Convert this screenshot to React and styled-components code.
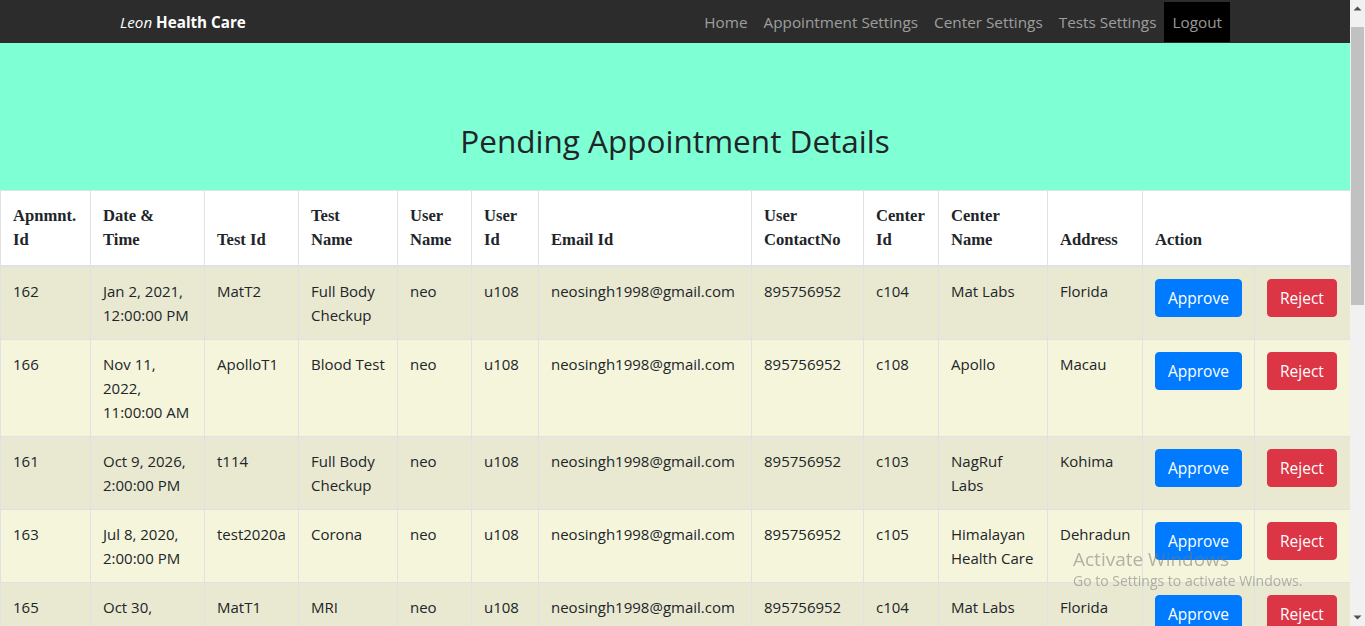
import React from "react";
import styled, { createGlobalStyle } from "styled-components";

const Global = createGlobalStyle`
  html, body { margin: 0; height: 100%; overflow: hidden; }
  body {
    font-family: "Open Sans", "Noto Sans", sans-serif;
    font-size: 15px;
    line-height: 24px;
    color: #212529;
    background: #fff;
  }
  * { box-sizing: border-box; }
`;

const Screen = styled.div`
  display: flex;
  height: 100vh;
`;

const Page = styled.main`
  flex: 1;
  min-width: 0;
  overflow: hidden;
`;

/* drawing of the browser's classic vertical scrollbar */
const ScrollBar = styled.div`
  width: 15px;
  flex: none;
  display: flex;
  flex-direction: column;
  background: #f1f1f1;
`;

const ScrollArrow = styled.div`
  height: 17px;
  flex: none;
  display: flex;
  align-items: center;
  justify-content: center;
`;

const ScrollTrack = styled.div`
  flex: 1;
  padding: 10px 1px 0;
`;

const ScrollThumb = styled.div`
  height: 278px;
  background: #c1c1c1;
`;

const Navbar = styled.nav`
  background: #2c2c2c;
  height: 43px;
`;

const NavInner = styled.div`
  max-width: 1140px;
  margin: 0 auto;
  padding: 0 15px;
  height: 100%;
  display: flex;
  align-items: center;
  justify-content: space-between;
`;

const Brand = styled.a`
  color: #fff;
  font-size: 15.2px;
  text-decoration: none;
  i { font-style: italic; }
  b { font-weight: 700; }
`;

const NavList = styled.ul`
  list-style: none;
  margin: 0;
  padding: 0;
  display: flex;
  align-items: center;
  height: 100%;
`;

const NavLink = styled.a`
  display: flex;
  align-items: center;
  height: 40px;
  padding: 1px 8px 0;
  font-size: 15.3px;
  text-decoration: none;
  color: ${(p) => (p.$active ? "rgba(255,255,255,0.6)" : "rgba(255,255,255,0.55)")};
  background: ${(p) => (p.$active ? "#000" : "transparent")};
`;

const Hero = styled.header`
  background: #7fffd4;
  padding: 79px 0 30px;
  text-align: center;
`;

const Title = styled.h2`
  margin: 0;
  font-size: 31.5px;
  font-weight: 500;
  line-height: 38px;
  color: #212529;
`;

const Table = styled.table`
  width: 100%;
  table-layout: fixed;
  border-collapse: collapse;
  background: #f5f5dc;
`;

const Col = styled.col`
  width: ${(p) => p.$w}px;
`;

const Th = styled.th`
  font-family: "Liberation Serif", "Times New Roman", serif;
  font-weight: 700;
  font-size: 16.6px;
  line-height: 24px;
  text-align: left;
  vertical-align: bottom;
  padding: 13px 12px 13px;
  background: #fff;
  border: 1px solid #dee2e6;
  border-bottom: 2px solid #dee2e6;
`;

const Row = styled.tr`
  background: ${(p) => (p.$odd ? "#e9e9d1" : "#f5f5dc")};
`;

const Td = styled.td`
  padding: 12px;
  vertical-align: top;
  border: 1px solid #dee2e6;
`;

const Button = styled.button`
  font-family: inherit;
  font-size: 15.5px;
  line-height: 24px;
  padding: 6px 12px;
  border-radius: 4px;
  border: 1px solid ${(p) => (p.$variant === "danger" ? "#dc3545" : "#007bff")};
  background: ${(p) => (p.$variant === "danger" ? "#dc3545" : "#007bff")};
  color: #fff;
  cursor: pointer;
`;

const Watermark = styled.div`
  position: fixed;
  left: 1073px;
  top: 548px;
  color: rgba(120, 120, 120, 0.55);
  font-family: "Open Sans", sans-serif;
  pointer-events: none;
  line-height: 1.2;
`;

const WmTitle = styled.div`
  font-size: 19px;
`;

const WmSub = styled.div`
  font-size: 14px;
  margin-top: 2px;
`;

const cols = [90, 114, 94, 99, 74, 67, 213, 112, 75, 109, 95, 112, 96];

const rows = [
  ["162", "Jan 2, 2021, 12:00:00 PM", "MatT2", "Full Body Checkup", "c104", "Mat Labs", "Florida"],
  ["166", "Nov 11, 2022, 11:00:00 AM", "ApolloT1", "Blood Test", "c108", "Apollo", "Macau"],
  ["161", "Oct 9, 2026, 2:00:00 PM", "t114", "Full Body Checkup", "c103", "NagRuf Labs", "Kohima"],
  ["163", "Jul 8, 2020, 2:00:00 PM", "test2020a", "Corona", "c105", "Himalayan Health Care", "Dehradun"],
  ["165", "Oct 30, 2021, 10:00:00 AM", "MatT1", "MRI", "c104", "Mat Labs", "Florida"],
  ["167", "Dec 5, 2021, 9:00:00 AM", "ApolloT2", "X-Ray", "c108", "Apollo", "Macau"],
];

const Arrow = ({ down }) => (
  <svg width="9" height="5" viewBox="0 0 9 5">
    <path d={down ? "M0.5 0.5h8L4.5 4.5z" : "M0.5 4.5h8L4.5 0.5z"} fill="#505050" />
  </svg>
);

export default function App() {
  return (
    <>
      <Global />
      <Screen>
        <Page>
          <Navbar>
            <NavInner>
              <Brand href="#">
                <i>Leon</i> <b>Health Care</b>
              </Brand>
              <NavList>
                <li><NavLink href="#">Home</NavLink></li>
                <li><NavLink href="#">Appointment Settings</NavLink></li>
                <li><NavLink href="#">Center Settings</NavLink></li>
                <li><NavLink href="#">Tests Settings</NavLink></li>
                <li><NavLink href="#" $active>Logout</NavLink></li>
              </NavList>
            </NavInner>
          </Navbar>
          <Hero>
            <Title>Pending Appointment Details</Title>
          </Hero>
          <Table>
            <colgroup>
              {cols.map((w, i) => (
                <Col key={i} $w={w} />
              ))}
            </colgroup>
            <thead>
              <tr>
                <Th>Apnmnt. Id</Th>
                <Th>Date &amp; Time</Th>
                <Th>Test Id</Th>
                <Th>Test Name</Th>
                <Th>User Name</Th>
                <Th>User Id</Th>
                <Th>Email Id</Th>
                <Th>User ContactNo</Th>
                <Th>Center Id</Th>
                <Th>Center Name</Th>
                <Th>Address</Th>
                <Th colSpan={2}>Action</Th>
              </tr>
            </thead>
            <tbody>
              {rows.map((r, i) => (
                <Row key={r[0] + i} $odd={i % 2 === 0}>
                  <Td>{r[0]}</Td>
                  <Td>{r[1]}</Td>
                  <Td>{r[2]}</Td>
                  <Td>{r[3]}</Td>
                  <Td>neo</Td>
                  <Td>u108</Td>
                  <Td>neosingh1998@gmail.com</Td>
                  <Td>895756952</Td>
                  <Td>{r[4]}</Td>
                  <Td>{r[5]}</Td>
                  <Td>{r[6]}</Td>
                  <Td>
                    <Button>Approve</Button>
                  </Td>
                  <Td>
                    <Button $variant="danger">Reject</Button>
                  </Td>
                </Row>
              ))}
            </tbody>
          </Table>
        </Page>
        <ScrollBar>
          <ScrollArrow>
            <Arrow />
          </ScrollArrow>
          <ScrollTrack>
            <ScrollThumb />
          </ScrollTrack>
          <ScrollArrow>
            <Arrow down />
          </ScrollArrow>
        </ScrollBar>
      </Screen>
      <Watermark>
        <WmTitle>Activate Windows</WmTitle>
        <WmSub>Go to Settings to activate Windows.</WmSub>
      </Watermark>
    </>
  );
}
